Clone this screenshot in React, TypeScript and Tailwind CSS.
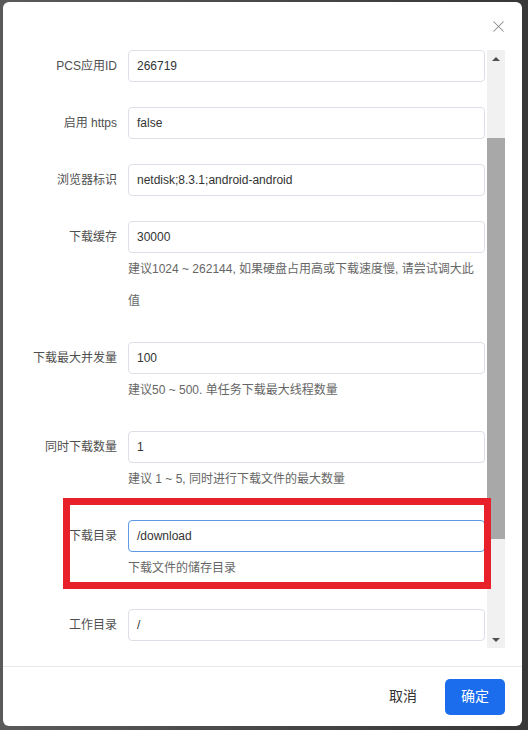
import { X } from "lucide-react";

type Field = {
  label: string;
  value: string;
  help?: string;
  focused?: boolean;
};

const fields: Field[] = [
  { label: "PCS应用ID", value: "266719" },
  { label: "启用 https", value: "false" },
  { label: "浏览器标识", value: "netdisk;8.3.1;android-android" },
  {
    label: "下载缓存",
    value: "30000",
    help: "建议1024 ~ 262144, 如果硬盘占用高或下载速度慢, 请尝试调大此值",
  },
  { label: "下载最大并发量", value: "100", help: "建议50 ~ 500. 单任务下载最大线程数量" },
  { label: "同时下载数量", value: "1", help: "建议 1 ~ 5, 同时进行下载文件的最大数量" },
  { label: "下载目录", value: "/download", help: "下载文件的储存目录", focused: true },
  { label: "工作目录", value: "/" },
];

const FormItem = ({ field }: { field: Field }) => {
  return (
    <div className="flex items-start gap-[11px] mb-[25px]">
      <label className="w-[114px] shrink-0 text-right h-[32px] leading-[32px] text-[12px] text-[#4f4f4f] whitespace-nowrap">
        {field.label}
      </label>
      <div className="flex-1 min-w-0">
        <div
          className={
            field.focused
              ? "h-[32px] rounded-[4px] border border-[#5d9be3] px-[8px] leading-[30px] text-[12px] text-[#333] bg-white"
              : "h-[32px] rounded-[4px] border border-[#dcdfe6] px-[8px] leading-[30px] text-[12px] text-[#333] bg-white"
          }
        >
          {field.value}
        </div>
        {field.help && (
          <p className="max-w-[350px] leading-[32px] text-[12px] text-[#666]">{field.help}</p>
        )}
      </div>
    </div>
  );
};

const Scrollbar = () => {
  return (
    <div className="w-[18px] ml-[2px] shrink-0 h-full bg-[#f1f1f1] flex flex-col">
      <div className="h-[17px] flex items-center justify-center">
        <div className="w-0 h-0 border-l-[4px] border-r-[4px] border-b-[4px] border-l-transparent border-r-transparent border-b-[#505050]" />
      </div>
      <div className="h-[71px]" />
      <div className="h-[401px] bg-[#a8a8a8]" />
      <div className="flex-1" />
      <div className="h-[17px] flex items-center justify-center">
        <div className="w-0 h-0 border-l-[4px] border-r-[4px] border-t-[4px] border-l-transparent border-r-transparent border-t-[#505050]" />
      </div>
    </div>
  );
};

const App = () => {
  return (
    <div className="min-h-screen bg-gradient-to-r from-[#5a5a5a] to-[#373737] pt-[2px] pl-[3px] font-['Liberation_Sans','Noto_Sans_CJK_SC',sans-serif]">
      <div className="relative w-[519px] h-[724px] bg-white rounded-[6px] flex flex-col overflow-hidden">
        <div className="h-[48px] shrink-0 flex justify-end pt-[15px] pr-[14px]">
          <X className="w-[19px] h-[19px] text-[#8a8a8a]" strokeWidth={1.3} />
        </div>

        <div className="h-[598px] shrink-0 flex overflow-hidden pr-[17px]">
          <div className="flex-1 min-w-0">
            {fields.map((f) => (
              <FormItem key={f.label} field={f} />
            ))}
          </div>
          <Scrollbar />
        </div>

        <div className="mt-[18px] flex-1 border-t border-[#e8e8e8] flex items-center justify-end gap-[12px] pr-[17px]">
          <button className="w-[60px] h-[36px] text-[14px] text-[#333]">取消</button>
          <button className="w-[60px] h-[36px] rounded-[5px] bg-[#1b6ded] text-[14px] text-white">
            确定
          </button>
        </div>

        {/* red highlight box */}
        <div className="absolute left-[60px] top-[496px] w-[428px] h-[91px] border-[7px] border-[#e8202a] pointer-events-none" />
      </div>
    </div>
  );
};

export default App;
